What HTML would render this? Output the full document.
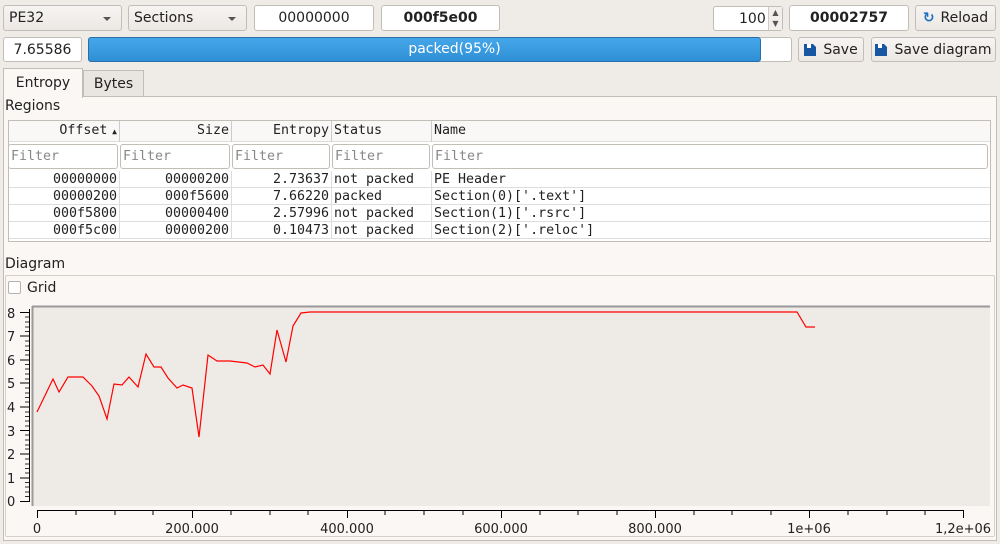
<!DOCTYPE html>
<html><head><meta charset="utf-8"><style>
*{box-sizing:border-box;margin:0;padding:0}
body{width:1000px;height:544px;background:#efebe7;font-family:"DejaVu Sans","Liberation Sans",sans-serif;font-size:14px;color:#222;position:relative;overflow:hidden}
.a{position:absolute}
.box{position:absolute;border:1px solid #c3bdb7;border-radius:3px;background:#fff;display:flex;align-items:center;justify-content:center;font-size:14px}
.btn{position:absolute;border:1px solid #c3bdb7;border-radius:3px;background:linear-gradient(#f6f4f2,#ece8e4);display:flex;align-items:center;justify-content:center;font-size:14px}
.combo{position:absolute;border:1px solid #c3bdb7;border-radius:3px;background:linear-gradient(#f6f4f2,#ece8e4);font-size:14px;padding-left:5px;display:flex;align-items:center}
.combo:after{content:"";position:absolute;right:10px;top:11px;border:4px solid transparent;border-top:4px solid #555}
.mono{font-family:"DejaVu Sans Mono","Liberation Mono",monospace;font-size:13.3px}
.c{position:absolute;white-space:pre}
.fl{position:absolute;border:1px solid #c3bdb7;border-radius:3px;background:#fff;color:#888;padding-left:2px;height:25px;top:144px;line-height:23px}
</style></head><body>
<div class="combo" style="left:3px;top:5px;width:119px;height:26px">PE32</div>
<div class="combo" style="left:128px;top:5px;width:119px;height:26px">Sections</div>
<div class="box" style="left:254px;top:5px;width:120px;height:26px">00000000</div>
<div class="box" style="left:381px;top:5px;width:119px;height:26px;font-weight:bold">000f5e00</div>
<div class="box" style="left:713px;top:6px;width:70px;height:25px;justify-content:flex-start;padding-left:25px">100</div>
<div class="a" style="left:768px;top:7px;width:14px;height:23px;border-left:1px solid #ccc;background:#f1eeeb;font-size:8px;line-height:11px;text-align:center;color:#555">▲<br>▼</div>
<div class="box" style="left:789px;top:5px;width:120px;height:26px;font-weight:bold">00002757</div>
<div class="btn" style="left:915px;top:5px;width:81px;height:26px"><span style="color:#1f6fbf;font-weight:bold;margin-right:6px">↻</span>Reload</div>
<div class="box" style="left:3px;top:37px;width:79px;height:25px">7.65586</div>
<div class="a" style="left:88px;top:37px;width:704px;height:25px;border:1px solid #c3bdb7;border-radius:3px;background:#fff"></div>
<div class="a" style="left:88px;top:37px;width:673px;height:25px;border:1px solid #2a6ea8;border-radius:3px;background:linear-gradient(#45a7ea,#2f8fd6);color:#fff;text-align:center;line-height:23px;padding-left:60px">packed(95%)</div>
<div class="btn" style="left:798px;top:37px;width:66px;height:25px"><svg width="12" height="12" style="margin-right:7px"><path d="M0 0h9l3 3v9H0z" fill="#1756a0"/><rect x="3" y="0" width="4" height="4" fill="#fff"/></svg>Save</div>
<div class="btn" style="left:871px;top:37px;width:125px;height:25px"><svg width="12" height="12" style="margin-right:7px"><path d="M0 0h9l3 3v9H0z" fill="#1756a0"/><rect x="3" y="0" width="4" height="4" fill="#fff"/></svg>Save diagram</div>
<div class="a" style="left:83px;top:70px;width:61px;height:27px;border:1px solid #c3bdb7;border-bottom:none;background:#e9e5e1;text-align:center;line-height:26px">Bytes</div>
<div class="a" style="left:3px;top:96px;width:994px;height:445px;border:1px solid #c3bdb7;background:#faf7f5"></div>
<div class="a" style="left:3px;top:68px;width:80px;height:30px;border:1px solid #c3bdb7;border-bottom:none;background:#faf7f5;text-align:center;line-height:28px">Entropy</div>
<div class="a" style="left:5px;top:98px">Regions</div>
<div class="a" style="left:8px;top:120px;width:983px;height:122px;border:1px solid #c3bdb7;background:#fff"></div>
<div class="a" style="left:9px;top:121px;width:981px;height:21px;background:#faf8f6;border-bottom:1px solid #ddd"></div>
<div class="a" style="left:119px;top:121px;width:1px;height:21px;background:#ccc"></div>
<div class="a" style="left:231px;top:121px;width:1px;height:21px;background:#ccc"></div>
<div class="a" style="left:331px;top:121px;width:1px;height:21px;background:#ccc"></div>
<div class="a" style="left:431px;top:121px;width:1px;height:21px;background:#ccc"></div>
<div class="mono">
<div class="c" style="left:10px;width:107px;text-align:right;top:123px">Offset<span style="font-size:8px"> ▲</span></div>
<div class="c" style="left:120px;width:109px;text-align:right;top:123px">Size</div>
<div class="c" style="left:232px;width:97px;text-align:right;top:123px">Entropy</div>
<div class="c" style="left:334px;top:123px">Status</div>
<div class="c" style="left:434px;top:123px">Name</div>
<div class="fl" style="left:8px;width:110px">Filter</div>
<div class="fl" style="left:120px;width:110px">Filter</div>
<div class="fl" style="left:232px;width:98px">Filter</div>
<div class="fl" style="left:332px;width:98px">Filter</div>
<div class="fl" style="left:432px;width:556px">Filter</div>
</div>
<div class="a" style="left:9px;top:171px;width:981px;height:68px;background:repeating-linear-gradient(#fff 0 16px,#ddd 16px 17px)"></div>
<div class="a" style="left:119px;top:171px;width:1px;height:68px;background:#ddd"></div>
<div class="a" style="left:231px;top:171px;width:1px;height:68px;background:#ddd"></div>
<div class="a" style="left:331px;top:171px;width:1px;height:68px;background:#ddd"></div>
<div class="a" style="left:431px;top:171px;width:1px;height:68px;background:#ddd"></div>
<div class="mono">
<div class="c" style="left:10px;width:107px;text-align:right;top:171px;line-height:17px">00000000
00000200
000f5800
000f5c00</div>
<div class="c" style="left:120px;width:109px;text-align:right;top:171px;line-height:17px">00000200
000f5600
00000400
00000200</div>
<div class="c" style="left:232px;width:97px;text-align:right;top:171px;line-height:17px">2.73637
7.66220
2.57996
0.10473</div>
<div class="c" style="left:334px;top:171px;line-height:17px">not packed
packed
not packed
not packed</div>
<div class="c" style="left:434px;top:171px;line-height:17px">PE Header
Section(0)['.text']
Section(1)['.rsrc']
Section(2)['.reloc']</div>
</div>
<div class="a" style="left:5px;top:256px">Diagram</div>
<div class="a" style="left:5px;top:275px;width:990px;height:262px;border:1px solid #d6d0ca;border-radius:2px"></div>
<div class="a" style="left:8px;top:281px;width:13px;height:13px;border:1px solid #b9b2ab;background:#fff;border-radius:2px"></div>
<div class="a" style="left:27px;top:280px">Grid</div>
<svg class="a" style="left:0;top:0" width="1000" height="544" font-family="DejaVu Sans, sans-serif" font-size="13" fill="#222">
<rect x="32" y="306" width="958" height="200" fill="#eeebe7"/>
<path d="M32 306.5H990M32.5 306V506" stroke="#999" stroke-width="2"/>
<path d="M29.5 309V502" stroke="#000"/>
<g stroke="#000">
<path d="M20 501.5h9M20 478h9M20 454h9M20 430.5h9M20 407h9M20 383h9M20 360h9M20 336h9M20 312.5h9"/>
</g>
<g stroke="#000" opacity=".8"><path d="M25 496.5h4M25 492h4M25 487h4M25 482.5h4M25 473h4M25 468.5h4M25 464h4M25 459h4M25 449h4M25 445h4M25 440h4M25 435h4M25 426h4M25 421h4M25 416.5h4M25 412h4M25 402h4M25 397.5h4M25 393h4M25 388h4M25 379h4M25 374h4M25 369h4M25 364.5h4M25 355h4M25 350.5h4M25 346h4M25 341h4M25 331.5h4M25 327h4M25 322h4M25 317h4"/></g>
<g text-anchor="start"><text x="7" y="506">0</text><text x="7" y="483">1</text><text x="7" y="459">2</text><text x="7" y="436">3</text><text x="7" y="412">4</text><text x="7" y="388">5</text><text x="7" y="365">6</text><text x="7" y="341">7</text><text x="7" y="318">8</text></g>
<path d="M37 510.5H964" stroke="#000"/>
<g stroke="#000"><path d="M37.5 510v8M192.5 510v8M347.5 510v8M501.5 510v8M655.5 510v8M809.5 510v8M963.5 510v8M76 510v5M115 510v5M153 510v5M231 510v5M270 510v5M308 510v5M385 510v5M424 510v5M463 510v5M540 510v5M578 510v5M617 510v5M694 510v5M732 510v5M771 510v5M848 510v5M887 510v5M925 510v5"/></g>
<g text-anchor="middle"><text x="37" y="533">0</text><text x="192" y="533">200.000</text><text x="347" y="533">400.000</text><text x="501" y="533">600.000</text><text x="655" y="533">800.000</text><text x="809" y="533">1e+06</text><text x="963" y="533">1,2e+06</text></g>
<polyline fill="none" stroke="#f00" stroke-width="1.2" points="37,412 53,379 59,392 68,377 83,377 92,386 99,396 107,419 114,384 122,385 129,377 138,387 146,354 154,367 161,367 168,378 177,388 183,385 192,388 199,437 208,355 217,361 230,361 247,363 255,367 263,365 270,374 277,330 286,362 293,326 301,313 310,312 797,312 806,327 815,327"/>
</svg>
</body></html>
